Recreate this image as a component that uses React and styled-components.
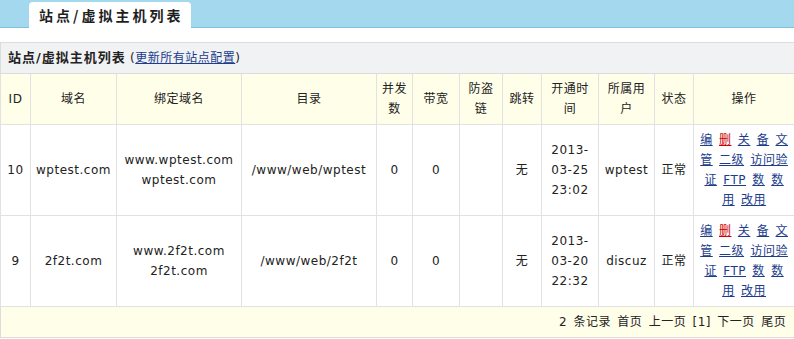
import React from "react";
import styled, { createGlobalStyle } from "styled-components";

const GlobalStyle = createGlobalStyle`
  html, body {
    margin: 0;
    padding: 0;
    background: #ffffff;
  }
  body {
    font-family: "DejaVu Sans", "Noto Sans CJK SC", sans-serif;
    font-size: 12px;
    color: #222222;
  }
`;

const Page = styled.div`
  width: 794px;
`;

const TopBar = styled.div`
  display: flex;
  align-items: flex-end;
  height: 27px;
  padding-left: 29px;
  background: #a4d8ee;
  border-bottom: 1px solid #80c1de;
`;

const Tab = styled.div`
  display: flex;
  align-items: center;
  height: 26px;
  margin-bottom: -1px;
  padding: 0 8px 0 10px;
  background: #ffffff;
  border-radius: 4px 4px 0 0;
  font-family: "Noto Sans CJK SC", sans-serif;
  font-size: 14px;
  font-weight: 700;
  letter-spacing: 3px;
  color: #1e1e1e;
`;

const Table = styled.table`
  width: 794px;
  margin-top: 14px;
  border-collapse: collapse;
  table-layout: fixed;
  border: 1px solid #dcdcdc;
  letter-spacing: 0.5px;
  line-height: 20px;
`;

const TitleCell = styled.td`
  padding: 5px 7px;
  background: #f1f2f4;
  border: 1px solid #dcdcdc;
  text-align: left;
  white-space: nowrap;
`;

const TitleText = styled.b`
  font-size: 13px;
  letter-spacing: 1px;
`;

const TitleLink = styled.a`
  color: #1c3d8c;
  text-decoration: underline;
  cursor: pointer;
`;

const HeadCell = styled.th`
  padding: 5px 0;
  background: #fffee9;
  border: 1px solid #e2e2e2;
  font-weight: 400;
  text-align: center;
  vertical-align: middle;
`;

const Cell = styled.td`
  padding: 5px 0;
  background: #ffffff;
  border: 1px solid #e2e2e2;
  text-align: center;
  vertical-align: middle;
  white-space: nowrap;
`;

const OpsLine = styled.div`
  word-spacing: 2px;
  white-space: nowrap;
`;

const OpLink = styled.a`
  color: ${(p) => (p.$danger ? "#cc0000" : "#1c3d8c")};
  text-decoration: underline;
  cursor: pointer;
`;

const FooterCell = styled.td`
  padding: 5px 8px 5px 0;
  background: #fffee9;
  border: 1px solid #dcdcdc;
  text-align: right;
  word-spacing: 2px;
`;

const colWidths = [30, 86, 125, 135, 36, 47, 43, 39, 57, 56, 39, 101];

const headers = [
  ["ID"],
  ["域名"],
  ["绑定域名"],
  ["目录"],
  ["并发", "数"],
  ["带宽"],
  ["防盗", "链"],
  ["跳转"],
  ["开通时", "间"],
  ["所属用", "户"],
  ["状态"],
  ["操作"],
];

const opsLines = [
  [{ t: "编" }, { t: "删", danger: true }, { t: "关" }, { t: "备" }, { t: "文" }],
  [{ t: "管" }, { t: "二级" }, { t: "访问验" }],
  [{ t: "证" }, { t: "FTP" }, { t: "数" }, { t: "数" }],
  [{ t: "用" }, { t: "改用" }],
];

const rows = [
  {
    id: "10",
    domain: "wptest.com",
    bind: ["www.wptest.com", "wptest.com"],
    dir: "/www/web/wptest",
    conc: "0",
    bw: "0",
    anti: "",
    jump: "无",
    time: ["2013-", "03-25", "23:02"],
    user: "wptest",
    status: "正常",
  },
  {
    id: "9",
    domain: "2f2t.com",
    bind: ["www.2f2t.com", "2f2t.com"],
    dir: "/www/web/2f2t",
    conc: "0",
    bw: "0",
    anti: "",
    jump: "无",
    time: ["2013-", "03-20", "22:32"],
    user: "discuz",
    status: "正常",
  },
];

const Lines = ({ parts }) =>
  parts.map((p, i) => (
    <React.Fragment key={i}>
      {i > 0 && <br />}
      {p}
    </React.Fragment>
  ));

const Ops = () =>
  opsLines.map((line, li) => (
    <OpsLine key={li}>
      {line.map((l, i) => (
        <React.Fragment key={i}>
          {i > 0 && " "}
          <OpLink $danger={l.danger}>{l.t}</OpLink>
        </React.Fragment>
      ))}
    </OpsLine>
  ));

export default function App() {
  return (
    <Page>
      <GlobalStyle />
      <TopBar>
        <Tab>站点/虚拟主机列表</Tab>
      </TopBar>
      <Table>
        <colgroup>
          {colWidths.map((w, i) => (
            <col key={i} style={{ width: w }} />
          ))}
        </colgroup>
        <tbody>
          <tr>
            <TitleCell colSpan={12}>
              <TitleText>站点/虚拟主机列表</TitleText> (
              <TitleLink>更新所有站点配置</TitleLink>)
            </TitleCell>
          </tr>
          <tr>
            {headers.map((h, i) => (
              <HeadCell key={i}>
                <Lines parts={h} />
              </HeadCell>
            ))}
          </tr>
          {rows.map((r) => (
            <tr key={r.id}>
              <Cell>{r.id}</Cell>
              <Cell>{r.domain}</Cell>
              <Cell>
                <Lines parts={r.bind} />
              </Cell>
              <Cell>{r.dir}</Cell>
              <Cell>{r.conc}</Cell>
              <Cell>{r.bw}</Cell>
              <Cell>{r.anti}</Cell>
              <Cell>{r.jump}</Cell>
              <Cell>
                <Lines parts={r.time} />
              </Cell>
              <Cell>{r.user}</Cell>
              <Cell>{r.status}</Cell>
              <Cell>
                <Ops />
              </Cell>
            </tr>
          ))}
          <tr>
            <FooterCell colSpan={12}>
              2 条记录 首页 上一页 [1] 下一页 尾页
            </FooterCell>
          </tr>
        </tbody>
      </Table>
    </Page>
  );
}
